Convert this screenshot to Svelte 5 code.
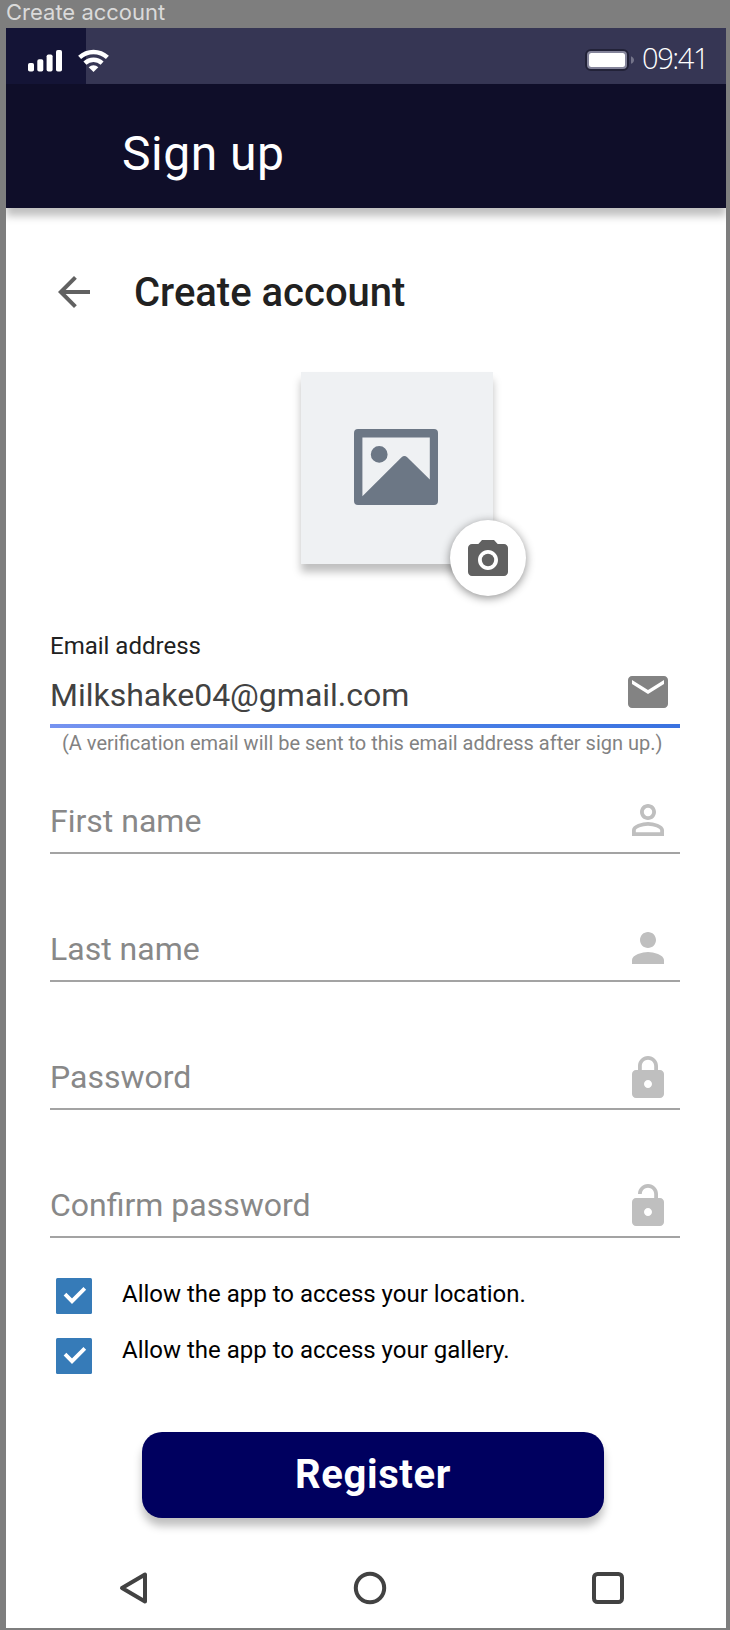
<script>
  const fields = [
    { label: 'First name', icon: 'personOutline' },
    { label: 'Last name', icon: 'person' },
    { label: 'Password', icon: 'lock' },
    { label: 'Confirm password', icon: 'lockOpen' }
  ];
  const icons = {
    personOutline:
      'M12 5.9a2.1 2.1 0 1 1 0 4.2 2.1 2.1 0 0 1 0-4.2m0 9c2.97 0 6.1 1.46 6.1 2.1v1.1H5.9V17c0-.64 3.13-2.1 6.1-2.1M12 4C9.79 4 8 5.79 8 8s1.79 4 4 4 4-1.79 4-4-1.79-4-4-4zm0 9c-2.67 0-8 1.34-8 4v3h16v-3c0-2.66-5.33-4-8-4z',
    person:
      'M12 12c2.21 0 4-1.79 4-4s-1.79-4-4-4-4 1.79-4 4 1.79 4 4 4zm0 2c-2.67 0-8 1.34-8 4v2h16v-2c0-2.66-5.33-4-8-4z',
    lock:
      'M18 8h-1V6c0-2.76-2.24-5-5-5S7 3.24 7 6v2H6c-1.1 0-2 .9-2 2v10c0 1.1.9 2 2 2h12c1.1 0 2-.9 2-2V10c0-1.1-.9-2-2-2zm-6 9c-1.1 0-2-.9-2-2s.9-2 2-2 2 .9 2 2-.9 2-2 2zm3.1-9H8.9V6c0-1.71 1.39-3.1 3.1-3.1s3.1 1.39 3.1 3.1v2z',
    lockOpen:
      'M12 17c1.1 0 2-.9 2-2s-.9-2-2-2-2 .9-2 2 .9 2 2 2zm6-9h-1V6c0-2.76-2.24-5-5-5S7 3.24 7 6h1.9c0-1.71 1.39-3.1 3.1-3.1s3.1 1.39 3.1 3.1v2H6c-1.1 0-2 .9-2 2v10c0 1.1.9 2 2 2h12c1.1 0 2-.9 2-2V10c0-1.1-.9-2-2-2z'
  };
  const permissions = ['Allow the app to access your location.', 'Allow the app to access your gallery.'];
</script>

<div class="board">
  <div class="board-label">Create account</div>
  <main class="phone">
    <div class="status">
      <div class="status-left">
        <svg class="signal" width="34" height="22" viewBox="0 0 34 22" fill="#fff">
          <rect x="0" y="13" width="6" height="8.6" rx="1.8" />
          <rect x="9.3" y="9.2" width="6" height="12.4" rx="1.8" />
          <rect x="18.6" y="4.5" width="6" height="17.1" rx="1.8" />
          <rect x="28" y="0" width="6" height="21.6" rx="1.8" />
        </svg>
        <svg class="wifi" width="32" height="22" viewBox="0 0 32 22">
          <path d="M1.6 7.4a20.5 20.5 0 0 1 27.8 0" fill="none" stroke="#fff" stroke-width="4.4" />
          <path d="M6.9 13.1a12.7 12.7 0 0 1 17.2 0" fill="none" stroke="#fff" stroke-width="4.4" />
          <path d="M10.7 17.2a7 7 0 0 1 9.6 0L15.5 22z" fill="#fff" />
        </svg>
      </div>
      <svg class="battery" width="50" height="24" viewBox="0 0 50 24">
        <rect x="1" y="2" width="42" height="20" rx="5" fill="#84849a" stroke="#222238" stroke-width="2" />
        <rect x="4" y="5" width="36" height="14" rx="2.5" fill="#fff" />
        <path d="M46 8.2c4 1.6 4 6 0 7.6z" fill="#74748a" />
      </svg>
      <span class="time">09:41</span>
    </div>
    <header>Sign up</header>

    <div class="title">
      <svg width="48" height="48" viewBox="0 0 24 24" fill="#616161"><path d="M20 11H7.83l5.59-5.59L12 4l-8 8 8 8 1.41-1.41L7.83 13H20v-2z" /></svg>
      <h1>Create account</h1>
    </div>

    <div class="photo">
      <svg width="84" height="76" viewBox="0 0 84 76">
        <path fill="#6c7785" fill-rule="evenodd" d="M4 0h76q4 0 4 4v68q0 4-4 4H4q-4 0-4-4V4q0-4 4-4zM8.4 8.6V67.2L47.6 28.2q2.8-2.4 5.6 0L75.8 50.6V8.6zM25.2 17a8.4 8.4 0 1 1 0 16.8 8.4 8.4 0 0 1 0-16.8z" />
      </svg>
      <div class="camera">
        <svg width="48" height="48" viewBox="0 0 24 24" fill="#616161"><circle cx="12" cy="12" r="3.1" /><path d="M9 2L7.17 4H4c-1.1 0-2 .9-2 2v12c0 1.1.9 2 2 2h16c1.1 0 2-.9 2-2V6c0-1.1-.9-2-2-2h-3.17L15 2H9zm3 15c-2.76 0-5-2.24-5-5s2.24-5 5-5 5 2.24 5 5-2.24 5-5 5z" /></svg>
      </div>
    </div>

    <section class="form">
      <div class="caption">Email address</div>
      <div class="field email">
        <span>Milkshake04@gmail.com</span>
        <svg width="48" height="48" viewBox="0 0 24 24" fill="#838383"><path d="M20 4H4c-1.1 0-2 .9-2 2v12c0 1.1.9 2 2 2h16c1.1 0 2-.9 2-2V6c0-1.1-.9-2-2-2zm0 4l-8 5-8-5V6l8 5 8-5v2z" /></svg>
      </div>
      <div class="bar"></div>
      <div class="hint">(A verification email will be sent to this email address after sign up.)</div>
      {#each fields as f}
        <div class="field">
          <span>{f.label}</span>
          <svg class:low={f.icon.startsWith('lock')} width="48" height="48" viewBox="0 0 24 24" fill="#bfbfbf"><path fill-rule="evenodd" d={icons[f.icon]} /></svg>
        </div>
      {/each}
    </section>

    <div class="permissions">
      <div class="boxes">
        {#each permissions as p}
          <svg width="36" height="36" viewBox="0 0 36 36" role="img" aria-label={p}>
            <rect width="36" height="36" rx="1.5" fill="#367bb8" />
            <path d="M9 16.2l7 7L28.8 10.4" fill="none" stroke="#fff" stroke-width="3.8" />
          </svg>
        {/each}
      </div>
      <div class="texts">
        {#each permissions as p}<div>{p}</div>{/each}
      </div>
    </div>

    <button>Register</button>

    <nav>
      <svg width="32" height="36" viewBox="0 0 32 36"><path d="M4 18L27 4.5v27z" /></svg>
      <svg width="36" height="36" viewBox="0 0 36 36"><circle cx="18" cy="18" r="14.2" /></svg>
      <svg width="36" height="36" viewBox="0 0 36 36"><rect x="4" y="4" width="28" height="28" rx="3.5" /></svg>
    </nav>
  </main>
</div>

<style>
  :global(body) { margin: 0; background: #7e7e7e; }
  .board { box-sizing: border-box; width: 730px; height: 1630px; padding: 0 4px 2px 6px; overflow: hidden; background: #7e7e7e; font-family: Roboto, sans-serif; }
  .board-label { height: 28px; line-height: 25px; font-family: Inter, sans-serif; font-size: 22px; color: #dadada; white-space: nowrap; }
  .phone { width: 720px; height: 1600px; overflow: hidden; background: #fff; }
  .status { display: flex; height: 56px; background: #363654; }
  .status-left { display: flex; width: 80px; height: 56px; background: #141436; }
  .signal { flex: none; margin: 22px 0 0 22px; }
  .wifi { flex: none; margin: 22px 0 0 16px; overflow: visible; }
  .battery { flex: none; margin: 20px 0 0 499px; }
  .time { margin-left: 7px; line-height: 59px; font-family: "Open Sans", sans-serif; font-weight: 350; font-size: 29px; letter-spacing: -1.4px; color: #fff; white-space: nowrap; }
  header { height: 124px; box-sizing: border-box; padding: 42px 0 0 116px; background: #0f0e29; color: #fff; font-size: 48px; line-height: 56px; letter-spacing: 0.5px; box-shadow: 0 8px 8px rgba(0, 0, 0, 0.25); }
  .title { display: flex; align-items: flex-start; padding: 60px 0 0 44px; height: 48px; }
  .title h1 { margin: 1px 0 0 36px; font-size: 40px; font-weight: 500; line-height: 48px; color: #212121; white-space: nowrap; }
  .photo { position: relative; display: flex; align-items: center; justify-content: center; width: 192px; height: 192px; margin: 56px 0 0 295px; background: #eff1f3; box-shadow: 0 8px 8px rgba(0, 0, 0, 0.25); }
  .photo > svg { margin: -2px 2px 0 0; }
  .camera { position: absolute; left: 149px; top: 148px; width: 76px; height: 76px; box-sizing: border-box; padding: 16px 14px 0; border-radius: 50%; background: #fff; box-shadow: 0 2px 10px rgba(0, 0, 0, 0.45); }
  .camera svg { display: block; }
  .form { width: 630px; margin: 68px 0 0 44px; }
  .caption { height: 36px; line-height: 28px; font-size: 24px; color: #212121; }
  .field { display: flex; justify-content: space-between; align-items: flex-start; box-sizing: border-box; height: 58px; margin-bottom: 70px; padding-right: 8px; border-bottom: 2px solid #a3a3a3; font-size: 32px; line-height: 48px; color: #888; }
  .field span { margin-top: 1px; }
  .field .low { margin-top: 2px; }
  .email { height: 56px; margin: 0; border: 0; color: #424242; }
  .email span { margin-top: 3px; }
  .bar { height: 4px; background: linear-gradient(90deg, #7693f0, #4e83e8 50%, #3a72e0); }
  .hint { height: 68px; padding-left: 12px; font-size: 20px; line-height: 30px; color: #828282; white-space: nowrap; }
  .permissions { display: flex; gap: 30px; margin: -30px 0 0 50px; height: 96px; }
  .boxes { display: flex; flex-direction: column; gap: 24px; }
  .texts { padding-top: 2px; font-size: 24px; line-height: 28px; color: #000; }
  .texts div { height: 56px; white-space: nowrap; }
  button { display: block; width: 462px; height: 86px; margin: 58px 0 0 136px; padding: 0; border: 0; border-radius: 20px; background: #00005f; color: #fff; font: 700 40px/86px Roboto, sans-serif; letter-spacing: 0.6px; box-shadow: 0 8px 8px rgba(0, 0, 0, 0.25); }
  nav { display: flex; justify-content: space-between; margin: 52px 100px 0 112px; }
  nav svg { fill: none; stroke: #424242; stroke-width: 4; stroke-linejoin: round; }
</style>
